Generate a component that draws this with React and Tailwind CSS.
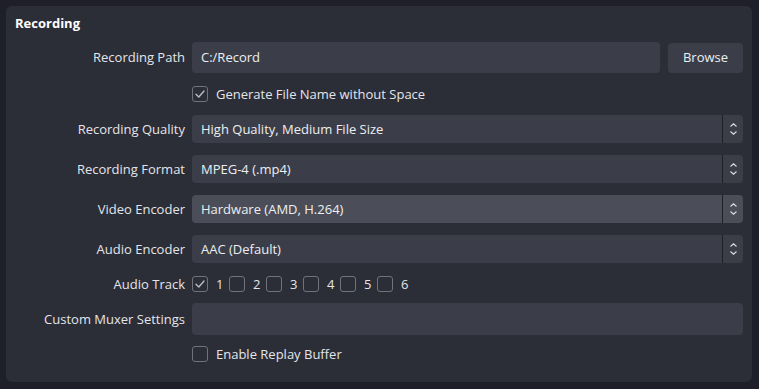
import { useState } from 'react'

const font = { fontFamily: '"Open Sans", "Noto Sans", sans-serif' }

function Check({ checked }) {
  return (
    <span className="w-4 h-4 rounded-[3px] border-[1.5px] border-[#70737d] flex items-center justify-center shrink-0">
      {checked ? (
        <svg width="12" height="12" viewBox="0 0 12 12" fill="none">
          <path d="M2 6.3 L4.8 9 L10 3" stroke="#b9bcc4" strokeWidth="1.4" strokeLinecap="round" strokeLinejoin="round" />
        </svg>
      ) : null}
    </span>
  )
}

function Label({ children }) {
  return <div className="w-[177px] shrink-0 text-right pr-[7px] pt-px text-[13px] text-[#e4e5ea]">{children}</div>
}

function Select({ value, hover }) {
  return (
    <div className={`flex-1 h-7 rounded-[4px] flex items-stretch ${hover ? 'bg-[#4b4e59]' : 'bg-[#3b3e48]'}`}>
      <div className="flex-1 flex items-center pl-[9px] pt-px text-[13px] text-[#eceef2]">{value}</div>
      <div className="w-px bg-[#1e1f27]" />
      <div className="w-5 flex items-center justify-center">
        <svg width="9" height="14" viewBox="0 0 9 14" fill="none">
          <path d="M1.5 4.5 L4.5 1.8 L7.5 4.5" stroke="#dcdde2" strokeWidth="1.1" />
          <path d="M1.5 9.5 L4.5 12.2 L7.5 9.5" stroke="#dcdde2" strokeWidth="1.1" />
        </svg>
      </div>
    </div>
  )
}

export default function App() {
  const [tracks] = useState([true, false, false, false, false, false])

  return (
    <div className="w-[759px] h-[389px] bg-[#1e1f28] p-[6px] pr-[7px] pb-[7px]" style={font}>
      <div className="h-full bg-[#2b2d37] rounded-[6px] px-[9px] pt-[7px]">
        <div className="text-[13px] font-bold text-white leading-[18px] pt-px">Recording</div>

        <div className="flex items-center mt-[10px]">
          <Label>Recording Path</Label>
          <div className="flex-1 h-[31px] rounded-[4px] bg-[#3b3e48] flex items-center pl-[9px] pt-px text-[13px] text-[#eceef2]">C:/Record</div>
          <button className="ml-2 w-[75px] h-[30px] rounded-[4px] bg-[#3b3e48] pt-px text-[13px] text-[#eceef2]">Browse</button>
        </div>

        <div className="flex items-center mt-[13px] h-4">
          <div className="w-[177px] shrink-0" />
          <Check checked />
          <span className="ml-2 pt-px text-[13px] text-[#e4e5ea]">Generate File Name without Space</span>
        </div>

        <div className="flex items-center mt-[13px]">
          <Label>Recording Quality</Label>
          <Select value="High Quality, Medium File Size" />
        </div>
        <div className="flex items-center mt-3">
          <Label>Recording Format</Label>
          <Select value="MPEG-4 (.mp4)" />
        </div>
        <div className="flex items-center mt-3">
          <Label>Video Encoder</Label>
          <Select value="Hardware (AMD, H.264)" hover />
        </div>
        <div className="flex items-center mt-3">
          <Label>Audio Encoder</Label>
          <Select value="AAC (Default)" />
        </div>

        <div className="flex items-center mt-[13px] h-4">
          <Label>Audio Track</Label>
          <div className="flex items-center">
            {tracks.map((on, i) => (
              <div key={i} className="flex items-center w-[37px]">
                <Check checked={on} />
                <span className="ml-2 pt-px text-[13px] text-[#e4e5ea]">{i + 1}</span>
              </div>
            ))}
          </div>
        </div>

        <div className="flex items-center mt-[11px]">
          <Label>Custom Muxer Settings</Label>
          <div className="flex-1 h-8 rounded-[4px] bg-[#3b3e48]" />
        </div>

        <div className="flex items-center mt-[11px] h-4">
          <div className="w-[177px] shrink-0" />
          <Check />
          <span className="ml-2 pt-px text-[13px] text-[#e4e5ea]">Enable Replay Buffer</span>
        </div>
      </div>
    </div>
  )
}
